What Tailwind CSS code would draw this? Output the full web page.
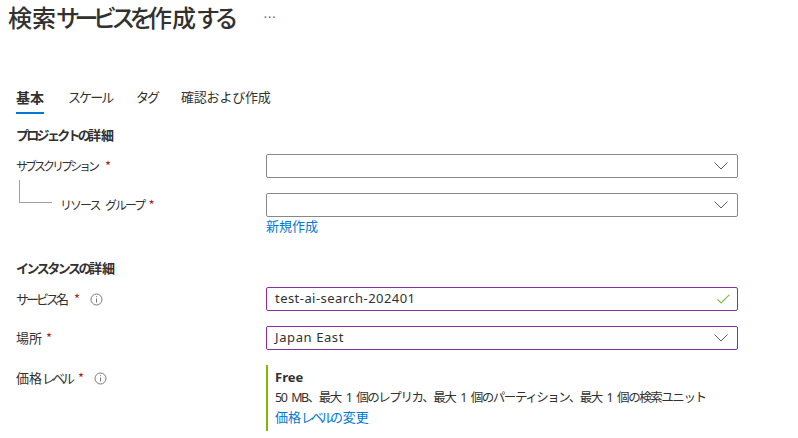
<!DOCTYPE html>
<html lang="ja">
<head>
  <meta charset="UTF-8" />
  <title>検索サービスを作成する</title>
  <script src="https://cdn.jsdelivr.net/npm/@tailwindcss/browser@4"></script>
</head>
<body class="bg-white w-[798px] h-[438px] overflow-hidden font-['Noto_Sans','Noto_Sans_CJK_JP',sans-serif] text-[13px] text-[#323130]">
  <!-- title -->
  <div class="h-[34px] pl-2 flex items-start">
    <h1 class="text-[24px] leading-[34px] font-medium text-[#323130] whitespace-nowrap font-['Noto_Sans_CJK_JP',sans-serif]">検索<span class="tracking-[-5.6px]">サービスを</span>作成<span class="tracking-[-5.6px]">する</span></h1>
    <span class="ml-[31px] mt-[12px] text-[12px] leading-none tracking-[1px] text-[#605e5c]">···</span>
  </div>

  <!-- tabs -->
  <div class="mt-[49px] pl-4 flex h-[31px] font-['Noto_Sans_CJK_JP',sans-serif]">
    <div class="w-[28px] border-b-2 border-[#0078d4] font-bold text-[14px] leading-[28px] whitespace-nowrap">基本</div>
    <div class="ml-[24px] w-[45px] text-[13px] leading-[28px] tracking-[-1.9px] whitespace-nowrap">スケール</div>
    <div class="ml-[23px] w-[22px] text-[13px] leading-[28px] tracking-[-2px] whitespace-nowrap">タグ</div>
    <div class="ml-[23px] text-[13px] leading-[28px] tracking-[-0.2px] whitespace-nowrap">確認および作成</div>
  </div>

  <div class="pl-4 w-[738px]">
    <!-- project -->
    <h2 class="mt-[12px] h-[18px] text-[13px] leading-[18px] font-bold whitespace-nowrap font-['Noto_Sans_CJK_JP',sans-serif]"><span class="tracking-[-2.7px]">プロジェクトの</span>詳細</h2>

    <div class="relative mt-[10px] flex items-center h-[24px]">
      <label class="w-[250px] flex items-center font-['Noto_Sans_CJK_JP',sans-serif]">
        <span class="text-[12px] tracking-[-3px]">サブスクリプション</span>
        <span class="ml-[8px] text-[#a4262c]">*</span>
      </label>
      <div class="flex-1 h-full border border-[#8a8886] rounded-[2px] flex items-center justify-end pr-[8px]">
        <svg width="16" height="8" viewBox="0 0 16 8" fill="none" stroke="#605e5c"><path d="M1.5 .5 8 7 14.5 .5" /></svg>
      </div>
    </div>

    <div class="relative mt-[15px] flex items-center h-[24px]">
      <div class="absolute left-[3px] top-[-13px] w-[33px] h-[23px] border-l border-b border-[#a19f9d]"></div>
      <label class="w-[250px] pl-[44px] flex items-center font-['Noto_Sans_CJK_JP',sans-serif]">
        <span class="text-[12px] tracking-[-2px] whitespace-nowrap [word-spacing:5px]">リソース グループ</span>
        <span class="ml-[4px] text-[#a4262c]">*</span>
      </label>
      <div class="flex-1 h-full border border-[#8a8886] rounded-[2px] flex items-center justify-end pr-[8px]">
        <svg width="16" height="8" viewBox="0 0 16 8" fill="none" stroke="#605e5c"><path d="M1.5 .5 8 7 14.5 .5" /></svg>
      </div>
    </div>
    <div class="pl-[250px] h-[18px] text-[13px] leading-[17px] text-[#0078d4] font-['Noto_Sans_CJK_JP',sans-serif]">新規作成</div>

    <!-- instance -->
    <h2 class="mt-[24px] h-[18px] text-[13px] leading-[18px] font-bold whitespace-nowrap font-['Noto_Sans_CJK_JP',sans-serif]"><span class="tracking-[-2.5px]">インスタンスの</span>詳細</h2>

    <div class="mt-[10px] flex items-center h-[24px]">
      <label class="w-[250px] flex items-center font-['Noto_Sans_CJK_JP',sans-serif]">
        <span class="tracking-[-3px]">サービス</span><span>名</span>
        <span class="ml-[5px] text-[#a4262c]">*</span>
        <svg class="ml-[10px]" width="13" height="13" viewBox="0 0 13 13" fill="none" stroke="#797775"><circle cx="6.5" cy="6.5" r="5.5" /><path d="M6.5 5.5v4M6.5 3.2v1" /></svg>
      </label>
      <div class="flex-1 h-full border border-[#8a2da5] rounded-[2px] flex items-center justify-between pl-[8px] pr-[7px]">
        <span class="tracking-[0.45px]">test-ai-search-202401</span>
        <svg width="13" height="10" viewBox="0 0 13 10" fill="none" stroke="#7fba45" stroke-width="1.1"><path d="M.5 5.5 4.2 9 12.5 .7" /></svg>
      </div>
    </div>

    <div class="mt-[15px] flex items-center h-[24px]">
      <label class="w-[250px] flex items-center font-['Noto_Sans_CJK_JP',sans-serif]">
        <span>場所</span>
        <span class="ml-[4px] text-[#a4262c]">*</span>
      </label>
      <div class="flex-1 h-full border border-[#8a2da5] rounded-[2px] flex items-center justify-between pl-[8px] pr-[8px]">
        <span class="tracking-[0.6px]">Japan East</span>
        <svg width="16" height="8" viewBox="0 0 16 8" fill="none" stroke="#605e5c"><path d="M1.5 .5 8 7 14.5 .5" /></svg>
      </div>
    </div>

    <div class="mt-[15px] flex h-[66px]">
      <label class="w-[250px] flex items-start pt-[4px] font-['Noto_Sans_CJK_JP',sans-serif] leading-[18px]">
        <span>価格</span><span class="tracking-[-3px]">レベル</span>
        <span class="ml-[6px] text-[#a4262c]">*</span>
        <svg class="ml-[10px] mt-[3px]" width="13" height="13" viewBox="0 0 13 13" fill="none" stroke="#797775"><circle cx="6.5" cy="6.5" r="5.5" /><path d="M6.5 5.5v4M6.5 3.2v1" /></svg>
      </label>
      <div class="flex-1 border-l-2 border-[#7fba00] pl-[7px] pt-[3px]">
        <div class="font-bold h-[19px] leading-[18px]">Free</div>
        <div class="h-[21px] leading-[21px] text-[12.5px] whitespace-nowrap tracking-[-1.45px] [word-spacing:3px]">50 MB、最大 1 個のレプリカ、最大 1 個のパーティション、最大 1 個の検索ユニット</div>
        <div class="h-[18px] leading-[17px] text-[13px] text-[#0078d4] font-['Noto_Sans_CJK_JP',sans-serif] whitespace-nowrap"><span>価格</span><span class="tracking-[-3.3px]">レベルの</span><span class="ml-[3px]">変更</span></div>
      </div>
    </div>
  </div>
</body>
</html>
